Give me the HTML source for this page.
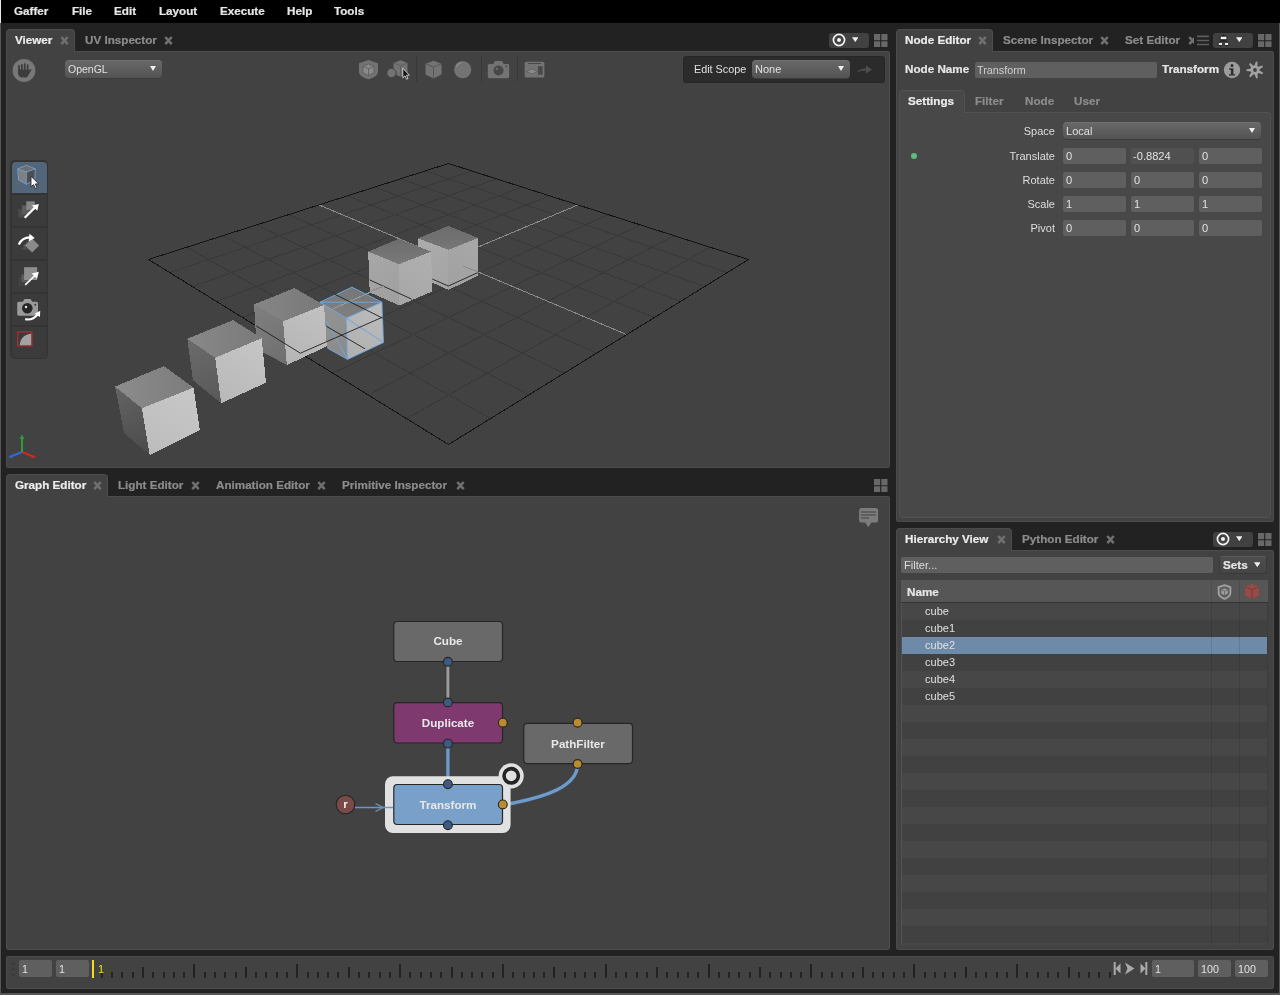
<!DOCTYPE html>
<html>
<head>
<meta charset="utf-8">
<title>Gaffer</title>
<style>
*{box-sizing:border-box;margin:0;padding:0}
html,body{width:1280px;height:995px;overflow:hidden;background:#222222}
body{position:relative;font-family:"Liberation Sans",sans-serif;font-size:12px;color:#e0e0e0}
.abs{position:absolute}
.t{position:absolute;white-space:nowrap;line-height:14px}
.bold{font-weight:bold}
#menubar{position:absolute;left:0;top:0;width:1280px;height:23px;background:#000}
#menubar .b{top:4px}
.panel{position:absolute;background:#424242;border:1px solid #4c4c4c;border-radius:0 2px 2px 2px}
.r{position:absolute;white-space:nowrap;font-size:10.5px;line-height:14px;color:#e0e0e0;transform:scaleX(1.05);transform-origin:0 50%}
.s{display:inline-block;transform:scaleX(1.06);transform-origin:0 50%}
.b{position:absolute;white-space:nowrap;font-size:10.5px;line-height:14px;font-weight:bold;color:#e6e6e6;-webkit-text-stroke:.2px;transform:scaleX(1.11);transform-origin:0 50%}
.dd{position:absolute;border-radius:4px;background:linear-gradient(#686868,#535353);border-top:1px solid #707070;border-bottom:1px solid #3c3c3c}
.dd:after{content:"";position:absolute;right:6px;top:5px;border-left:3.700px solid transparent;border-right:3.700px solid transparent;border-top:5.600px solid #efefef}
.tab{position:absolute;height:23px;background:#424242;border-top:1px solid #4e4e4e;border-radius:4px 4px 0 0}
.tabt{position:absolute;white-space:nowrap;font-weight:bold;font-size:11.5px;line-height:14px;letter-spacing:.3px;color:#8a8a8a}
.tabt.on{color:#ececec}
.x{position:absolute;width:9px;height:9px}
.field{position:absolute;background:#5f5f5f;border-radius:3px;border-top:1px solid #555;height:17px;color:#e6e6e6;font-size:11px;line-height:16px;padding-left:4px;white-space:nowrap;overflow:hidden}
.lbl{position:absolute;white-space:nowrap;font-size:11.5px;line-height:14px;color:#dcdcdc;text-align:right}
.tab{border:1px solid #4c4c4c;border-bottom:none}
.tb{position:absolute;white-space:nowrap;font-size:10.5px;line-height:14px;font-weight:bold;color:#8c8c8c;-webkit-text-stroke:.2px;transform:scaleX(1.11);transform-origin:0 50%}
.tb.on{color:#ececec}
.mb{position:absolute;height:15px;background:#414141;border-radius:3px}
.f{position:absolute;height:16px;background:#5f5f5f;border-radius:2px;font-size:10.5px;line-height:16px;color:#e2e2e2;padding-left:4px;white-space:nowrap}
.rl{position:absolute;white-space:nowrap;font-size:10.5px;line-height:14px;color:#dedede;text-align:right;width:120px;transform:scaleX(1.05);transform-origin:100% 50%}
</style>
</head>
<body>
<div id="root" style="position:absolute;left:0;top:0;width:1280px;height:995px;will-change:transform">
<!-- MENUBAR -->
<div id="menubar">
  <div class="abs" style="left:0;top:0;width:1px;height:23px;background:#e8e8e8"></div>
  <div class="b" style="left:14px">Gaffer</div>
  <div class="b" style="left:72px">File</div>
  <div class="b" style="left:114px">Edit</div>
  <div class="b" style="left:159px">Layout</div>
  <div class="b" style="left:220px">Execute</div>
  <div class="b" style="left:287px">Help</div>
  <div class="b" style="left:334px">Tools</div>
</div>
<div class="abs" style="left:0;top:23px;width:1.100px;height:972px;background:#565656"></div>
<div class="abs" style="left:1278.800px;top:23px;width:1.200px;height:972px;background:#585858"></div>
<div class="abs" style="left:0;top:993.400px;width:1280px;height:1.600px;background:#565656"></div>

<!-- VIEWER PANEL -->
<div class="panel" id="viewer" style="left:6px;top:51px;width:884px;height:417px"></div>
<!--V3D--><svg class="abs" style="left:0;top:0" width="1280" height="995" viewBox="0 0 1280 995" shape-rendering="crispEdges"><defs><linearGradient id="t0" gradientUnits="userSpaceOnUse" x1="448.4" y1="225.9" x2="448.4" y2="249.8"><stop offset="0" stop-color="#6c6c6c"/><stop offset="1" stop-color="#777777"/></linearGradient><linearGradient id="l0" gradientUnits="userSpaceOnUse" x1="418.0" y1="238.4" x2="448.4" y2="289.9"><stop offset="0" stop-color="#acacac"/><stop offset="1" stop-color="#a4a4a4"/></linearGradient><linearGradient id="r0" gradientUnits="userSpaceOnUse" x1="478.2" y1="238.0" x2="448.4" y2="289.9"><stop offset="0" stop-color="#a8a8a8"/><stop offset="1" stop-color="#a0a0a0"/></linearGradient><linearGradient id="t1" gradientUnits="userSpaceOnUse" x1="398.6" y1="238.9" x2="399.1" y2="264.2"><stop offset="0" stop-color="#6c6c6c"/><stop offset="1" stop-color="#7a7a7a"/></linearGradient><linearGradient id="l1" gradientUnits="userSpaceOnUse" x1="368.2" y1="251.6" x2="399.5" y2="305.5"><stop offset="0" stop-color="#a8a8a8"/><stop offset="1" stop-color="#9e9e9e"/></linearGradient><linearGradient id="r1" gradientUnits="userSpaceOnUse" x1="431.2" y1="251.6" x2="399.5" y2="305.5"><stop offset="0" stop-color="#b0b0b0"/><stop offset="1" stop-color="#a6a6a6"/></linearGradient><linearGradient id="t2" gradientUnits="userSpaceOnUse" x1="351.9" y1="287.2" x2="346.2" y2="318.1"><stop offset="0" stop-color="#767676"/><stop offset="1" stop-color="#808080"/></linearGradient><linearGradient id="l2" gradientUnits="userSpaceOnUse" x1="320.0" y1="302.2" x2="347.5" y2="359.4"><stop offset="0" stop-color="#949494"/><stop offset="1" stop-color="#8a8a8a"/></linearGradient><linearGradient id="r2" gradientUnits="userSpaceOnUse" x1="381.9" y1="302.2" x2="347.5" y2="359.4"><stop offset="0" stop-color="#bcbcbc"/><stop offset="1" stop-color="#b0b0b0"/></linearGradient><linearGradient id="t3" gradientUnits="userSpaceOnUse" x1="254.0" y1="304.4" x2="324.0" y2="305.0"><stop offset="0" stop-color="#868686"/><stop offset="1" stop-color="#787878"/></linearGradient><linearGradient id="l3" gradientUnits="userSpaceOnUse" x1="254.0" y1="304.4" x2="286.9" y2="365.0"><stop offset="0" stop-color="#808080"/><stop offset="1" stop-color="#6e6e6e"/></linearGradient><linearGradient id="r3" gradientUnits="userSpaceOnUse" x1="324.0" y1="305.0" x2="286.9" y2="365.0"><stop offset="0" stop-color="#c2c2c2"/><stop offset="1" stop-color="#b4b4b4"/></linearGradient><linearGradient id="t4" gradientUnits="userSpaceOnUse" x1="187.3" y1="338.7" x2="261.7" y2="338.2"><stop offset="0" stop-color="#888888"/><stop offset="1" stop-color="#7a7a7a"/></linearGradient><linearGradient id="l4" gradientUnits="userSpaceOnUse" x1="187.3" y1="338.7" x2="221.2" y2="403.3"><stop offset="0" stop-color="#6c6c6c"/><stop offset="1" stop-color="#585858"/></linearGradient><linearGradient id="r4" gradientUnits="userSpaceOnUse" x1="261.7" y1="338.2" x2="221.2" y2="403.3"><stop offset="0" stop-color="#c6c6c6"/><stop offset="1" stop-color="#b8b8b8"/></linearGradient><linearGradient id="t5" gradientUnits="userSpaceOnUse" x1="115.1" y1="386.6" x2="193.5" y2="387.6"><stop offset="0" stop-color="#8c8c8c"/><stop offset="1" stop-color="#7c7c7c"/></linearGradient><linearGradient id="l5" gradientUnits="userSpaceOnUse" x1="115.1" y1="386.6" x2="149.8" y2="455.3"><stop offset="0" stop-color="#646464"/><stop offset="1" stop-color="#4a4a4a"/></linearGradient><linearGradient id="r5" gradientUnits="userSpaceOnUse" x1="193.5" y1="387.6" x2="149.8" y2="455.3"><stop offset="0" stop-color="#c8c8c8"/><stop offset="1" stop-color="#bcbcbc"/></linearGradient></defs><line x1="471.8" y1="171.0" x2="169.7" y2="272.6" stroke="#383838" stroke-width="1" />
<line x1="425.2" y1="171.0" x2="727.3" y2="272.6" stroke="#383838" stroke-width="1" />
<line x1="496.4" y1="178.8" x2="192.3" y2="286.5" stroke="#383838" stroke-width="1" />
<line x1="400.6" y1="178.8" x2="704.7" y2="286.5" stroke="#383838" stroke-width="1" />
<line x1="522.2" y1="187.1" x2="216.5" y2="301.4" stroke="#383838" stroke-width="1" />
<line x1="374.8" y1="187.1" x2="680.5" y2="301.4" stroke="#383838" stroke-width="1" />
<line x1="549.3" y1="195.8" x2="242.4" y2="317.4" stroke="#383838" stroke-width="1" />
<line x1="347.7" y1="195.8" x2="654.6" y2="317.4" stroke="#383838" stroke-width="1" />
<line x1="608.3" y1="214.6" x2="300.3" y2="353.1" stroke="#383838" stroke-width="1" />
<line x1="288.7" y1="214.6" x2="596.7" y2="353.1" stroke="#383838" stroke-width="1" />
<line x1="640.3" y1="224.9" x2="332.9" y2="373.2" stroke="#383838" stroke-width="1" />
<line x1="256.7" y1="224.9" x2="564.1" y2="373.2" stroke="#383838" stroke-width="1" />
<line x1="674.2" y1="235.7" x2="368.1" y2="394.9" stroke="#383838" stroke-width="1" />
<line x1="222.8" y1="235.7" x2="528.9" y2="394.9" stroke="#383838" stroke-width="1" />
<line x1="710.2" y1="247.2" x2="406.5" y2="418.6" stroke="#383838" stroke-width="1" />
<line x1="186.8" y1="247.2" x2="490.5" y2="418.6" stroke="#383838" stroke-width="1" />
<line x1="578.0" y1="204.9" x2="270.3" y2="334.6" stroke="#8a8a8a" stroke-width="1" />
<line x1="319.0" y1="204.9" x2="626.7" y2="334.6" stroke="#8a8a8a" stroke-width="1" />
<polygon points="448.5,163.5 148.5,259.5 448.5,444.5 748.5,259.5" fill="none" stroke="#141414" stroke-width="1"/>
<polygon points="448.4,225.9 418.0,238.4 448.4,249.8 478.2,238.0" fill="url(#t0)" />
<polygon points="418.0,238.4 448.4,249.8 448.4,289.9 418.0,276.0" fill="url(#l0)" />
<polygon points="448.4,249.8 478.2,238.0 478.2,275.6 448.4,289.9" fill="url(#r0)" />
<polygon points="398.6,238.9 368.2,251.6 399.1,264.2 431.2,251.6" fill="url(#t1)" />
<polygon points="368.2,251.6 399.1,264.2 399.5,305.5 369.7,292.3" fill="url(#l1)" />
<polygon points="399.1,264.2 431.2,251.6 432.1,291.4 399.5,305.5" fill="url(#r1)" />
<polygon points="351.9,287.2 320.0,302.2 346.2,318.1 381.9,302.2" fill="url(#t2)" />
<polygon points="320.0,302.2 346.2,318.1 347.5,359.4 327.5,348.1" fill="url(#l2)" />
<polygon points="346.2,318.1 381.9,302.2 383.5,342.5 347.5,359.4" fill="url(#r2)" />
<line x1="333.5" y1="308.6" x2="379.6" y2="288.1" stroke="#9a9a9a" stroke-width="1" />
<line x1="351.9" y1="287.2" x2="320.0" y2="302.2" stroke="#6ea6dc" stroke-width="1" shape-rendering="geometricPrecision"/>
<line x1="320.0" y1="302.2" x2="346.2" y2="318.1" stroke="#6ea6dc" stroke-width="1" shape-rendering="geometricPrecision"/>
<line x1="346.2" y1="318.1" x2="381.9" y2="302.2" stroke="#6ea6dc" stroke-width="1" shape-rendering="geometricPrecision"/>
<line x1="381.9" y1="302.2" x2="351.9" y2="287.2" stroke="#6ea6dc" stroke-width="1" shape-rendering="geometricPrecision"/>
<line x1="346.2" y1="318.1" x2="347.5" y2="359.4" stroke="#6ea6dc" stroke-width="1" shape-rendering="geometricPrecision"/>
<line x1="381.9" y1="302.2" x2="383.5" y2="342.5" stroke="#6ea6dc" stroke-width="1" shape-rendering="geometricPrecision"/>
<line x1="383.5" y1="342.5" x2="347.5" y2="359.4" stroke="#6ea6dc" stroke-width="1" shape-rendering="geometricPrecision"/>
<line x1="347.5" y1="359.4" x2="327.5" y2="348.1" stroke="#6ea6dc" stroke-width="1" shape-rendering="geometricPrecision"/>
<line x1="320.0" y1="302.2" x2="381.9" y2="302.2" stroke="#6ea6dc" stroke-width="1" shape-rendering="geometricPrecision"/>
<line x1="346.2" y1="318.1" x2="383.5" y2="342.5" stroke="#6ea6dc" stroke-width="1" shape-rendering="geometricPrecision"/>
<line x1="325.6" y1="319.4" x2="346.5" y2="357.5" stroke="#6ea6dc" stroke-width="1" shape-rendering="geometricPrecision"/>
<polygon points="294.4,288.1 254.0,304.4 283.1,321.3 324.0,305.0" fill="url(#t3)" />
<polygon points="254.0,304.4 283.1,321.3 286.9,365.0 256.9,349.0" fill="url(#l3)" />
<polygon points="283.1,321.3 324.0,305.0 326.9,346.3 286.9,365.0" fill="url(#r3)" />
<polygon points="233.1,320.1 187.3,338.7 215.2,357.8 261.7,338.2" fill="url(#t4)" />
<polygon points="187.3,338.7 215.2,357.8 221.2,403.3 192.9,380.1" fill="url(#l4)" />
<polygon points="215.2,357.8 261.7,338.2 266.0,382.6 221.2,403.3" fill="url(#r4)" />
<polygon points="163.9,366.1 115.1,386.6 141.8,408.3 193.5,387.6" fill="url(#t5)" />
<polygon points="115.1,386.6 141.8,408.3 149.8,455.3 124.1,432.8" fill="url(#l5)" />
<polygon points="141.8,408.3 193.5,387.6 199.9,430.2 149.8,455.3" fill="url(#r5)" />
<polyline points="432.3,279.1 448.4,286.0 477.8,272.6" fill="none" stroke="#161616" stroke-width=".85" shape-rendering="geometricPrecision"/>
<line x1="463.1" y1="266.2" x2="477.8" y2="271.8" stroke="#8a8a8a" stroke-width="1" />
<line x1="369.6" y1="279.9" x2="411.8" y2="299.2" stroke="#161616" stroke-width="0.85" shape-rendering="geometricPrecision"/>
<line x1="371.7" y1="290.6" x2="384.4" y2="286.0" stroke="#8a8a8a" stroke-width="1" />
<line x1="300.6" y1="353.1" x2="382.5" y2="317.2" stroke="#161616" stroke-width="0.85" shape-rendering="geometricPrecision"/>
<line x1="326.2" y1="326.2" x2="365.0" y2="348.8" stroke="#161616" stroke-width="0.85" shape-rendering="geometricPrecision"/>
<line x1="335.0" y1="294.4" x2="382.5" y2="318.1" stroke="#161616" stroke-width="0.85" shape-rendering="geometricPrecision"/>
<line x1="256.2" y1="325.9" x2="300.6" y2="353.3" stroke="#161616" stroke-width="0.85" shape-rendering="geometricPrecision"/></svg><!--/V3D-->
<!-- viewer toolbar -->
<svg class="abs" style="left:11px;top:58px" width="26" height="26" viewBox="11 58 26 26"><circle cx="24" cy="70.400" r="11.400" fill="#787878"/><g fill="#3c3c3c"><rect x="18.100" y="65.100" width="1.700" height="8" rx=".8"/><rect x="21" y="64" width="1.700" height="8" rx=".8"/><rect x="23.900" y="63.200" width="1.700" height="8" rx=".8"/><rect x="26.800" y="64.200" width="1.700" height="8" rx=".8"/><path d="M18.100 69.600h10.400v1.700l1.700-2.200c.5-.6 1.600.2 1.100 1l-3.200 5.600c-.7 1.200-1.700 1.900-3 1.900h-3c-2.300 0-4-1.700-4-4z"/></g></svg>
<div class="dd" style="left:65px;top:60px;width:97px;height:18.500px"></div>
<div class="r" style="left:68px;top:62px;transform:none">OpenGL</div>
<div class="abs" style="left:683px;top:56px;width:202px;height:27px;background:#2b2b2b;border:1px solid #262626;border-radius:3px"></div>
<div class="r" style="left:694px;top:62px;font-size:10.8px;transform:none">Edit Scope</div>
<div class="dd" style="left:752px;top:60px;width:97.500px;height:18.500px"></div>
<div class="r" style="left:755px;top:62px">None</div>
<svg class="abs" style="left:855px;top:62px" width="18" height="14" viewBox="0 0 18 14"><path d="M1 11C4 7.500 7 6.500 11 6.500V3.500L17 7.500 11 11.500V8.500C7 8.500 4 9.200 1 11z" fill="#4e4e4e"/></svg>
<!--TBICONS--><svg class="abs" style="left:350px;top:52px" width="210" height="40" viewBox="350 52 210 40"><path d="M416.5 56V82" stroke="#383838" stroke-width="1"/><path d="M481.5 56V82" stroke="#383838" stroke-width="1"/><path d="M517.5 56V82" stroke="#383838" stroke-width="1"/><path d="M368.500 60l9.500 3.200v8.500c0 3.500-4.500 6-9.500 7.500-5-1.500-9.500-4-9.500-7.500v-8.500z" fill="#737373"/><path d="M368.500 64l5.500 2.300v6.500l-5.500 2.700-5.500-2.700v-6.500z" fill="#8a8a8a" stroke="#5a5a5a" stroke-width=".8"/><path d="M363 66.300l5.500 2.400 5.500-2.400M368.500 68.700v6.800" stroke="#5a5a5a" stroke-width=".8" fill="none"/><path d="M400.500 60.200l7 2.800v10.500l-7 3.200-7-3.200V63z" fill="#737373"/><path d="M393.500 63l7 2.800 7-2.800M400.500 65.800v10.900" stroke="#5c5c5c" stroke-width=".8" fill="none"/><circle cx="391.500" cy="73" r="4.600" fill="#737373" stroke="#434343" stroke-width="1"/><path d="M402.800 68.300v9.500l2.200-2 1.500 3.400 1.500-.7-1.500-3.300h2.900z" fill="#111" stroke="#eee" stroke-width=".8"/><path d="M433.500 60.800l8 3v10.800l-8 3.800-8-3.800V63.800z" fill="#737373"/><path d="M425.500 63.800l8 3.200 8-3.200M433.500 67v11.400" stroke="#565656" stroke-width="1" fill="none"/><circle cx="462.700" cy="69.600" r="8.600" fill="#737373"/><path d="M456.500 66.500c1.200-2.300 3-3.600 5.200-4" stroke="#8c8c8c" stroke-width="1.200" fill="none" stroke-linecap="round"/><path d="M489.500 64h3.800l1.700-3h7l1.700 3h3.800c1 0 1.700.7 1.700 1.700v10.800c0 1-.7 1.700-1.700 1.700h-18c-1 0-1.700-.7-1.700-1.700V65.700c0-1 .7-1.700 1.700-1.700z" fill="#737373"/><circle cx="498.500" cy="70.500" r="5" fill="#484848"/><circle cx="496.800" cy="68.800" r="1.100" fill="#737373"/><circle cx="506.300" cy="66.300" r=".9" fill="#484848"/><rect x="524.700" y="61.800" width="19.700" height="15.600" rx="1.500" fill="#737373"/><path d="M528 63.500h13" stroke="#484848" stroke-width="1"/><rect x="538" y="66.200" width="4.600" height="8.500" fill="#484848"/><path d="M526.500 71.500l5.500-2.500 5.500 2.500-5.500 2.500z" fill="#8a8a8a" stroke="#555" stroke-width=".6"/></svg><!--/TBICONS-->
<!--TOOLS--><div class="abs" style="left:10px;top:160px;width:38px;height:199px;background:#343434;border-radius:5px"></div><div class="abs" style="left:11.500px;top:161.5px;width:35px;height:31px;background:#536578;border-radius:4px 4px 0 0"></div><div class="abs" style="left:11.500px;top:194.5px;width:35px;height:31px;background:#3b3b3b;border-radius:0"></div><div class="abs" style="left:11.500px;top:227.5px;width:35px;height:31px;background:#3b3b3b;border-radius:0"></div><div class="abs" style="left:11.500px;top:260.5px;width:35px;height:31px;background:#3b3b3b;border-radius:0"></div><div class="abs" style="left:11.500px;top:293.5px;width:35px;height:31px;background:#3b3b3b;border-radius:0"></div><div class="abs" style="left:11.500px;top:326.5px;width:35px;height:31px;background:#3b3b3b;border-radius:0 0 4px 4px"></div><svg class="abs" style="left:6px;top:156px" width="50" height="210" viewBox="6 156 50 210"><path d="M26.300 165.400L35.300 168.800 26.300 172 17.700 168.800z" fill="#6e6e6e"/><path d="M17.700 168.800L26.300 172V184.300L18.600 180z" fill="#808080"/><path d="M26.300 172L35.300 168.800 34.800 180 26.300 184.300z" fill="#4e4e4e"/><path d="M26.300 165.400L35.300 168.800 34.800 180 26.300 184.300 18.600 180 17.700 168.800zM17.700 168.800L26.300 172 35.300 168.800M26.300 172V184.300" fill="none" stroke="#6fa3d6" stroke-width=".9"/><path d="M31 176.300v10.600l2.500-2.300 1.900 4 1.700-.8-1.900-3.900h3.600z" fill="#fff" stroke="#2a2a2a" stroke-width=".9"/><rect x="18.300" y="209.300" width="7" height="8" fill="#4c4c4c"/><rect x="22" y="205.500" width="7.500" height="8.500" fill="#5e5e5e"/><rect x="26.300" y="201.300" width="8.500" height="8.500" fill="#868686"/><path d="M24.700 217.800L36 206.500" stroke="#fff" stroke-width="2.200"/><path d="M38.800 204l-1.500 6.800-5.300-5.300z" fill="#fff"/><path d="M21 249.500l5-5 5 5z" fill="#4e4e4e"/><path d="M23 246l6-5.500 5 7z" fill="#5c5c5c"/><path d="M32.100 238.500l7 7-7 7-7-7z" fill="#8a8a8a"/><path d="M18.800 244.400c2.500-5 7.500-7.500 12.700-7" stroke="#fff" stroke-width="2.200" fill="none"/><path d="M29.500 233.800l5.200 4.300-6 3.300z" fill="#fff"/><rect x="19.500" y="278.500" width="8" height="6.500" fill="none" stroke="#4a4a4a" stroke-width="1"/><rect x="21.500" y="274.500" width="9" height="8" fill="#5a5a5a"/><rect x="24.100" y="267.200" width="13" height="12.800" fill="#8e8e8e"/><path d="M25.200 284.800L36 274.500" stroke="#fff" stroke-width="1.600"/><path d="M38.800 271.800l-1.800 7-5.300-5.300z" fill="#fff"/><path d="M18.900 301.800h3.800l1.800-2.700h6l1.800 2.700h4c1 0 1.700.7 1.700 1.700v10.500c0 1-.7 1.700-1.700 1.700H18.900c-1 0-1.700-.7-1.700-1.700v-10.500c0-1 .7-1.700 1.700-1.700z" fill="#9a9a9a"/><circle cx="27.300" cy="308.200" r="5.300" fill="#262626"/><circle cx="26" cy="307" r="1.200" fill="#e8e8e8"/><circle cx="35.300" cy="304.700" r="1" fill="#3a3a3a"/><path d="M25.200 319.200c5 1 9.500-1 12.500-4.800" stroke="#fff" stroke-width="2.200" fill="none"/><path d="M40.300 310.700l-.4 6.300-5.300-3.300z" fill="#fff"/><path d="M31.400 333.800v11.600H19.800c0-6.500 5-11.600 11.600-11.600z" fill="#a2a2a2"/><rect x="17.700" y="331.900" width="14.200" height="14" fill="none" stroke="#c8282c" stroke-width="1"/></svg><svg class="abs" style="left:6px;top:430px" width="40" height="34" viewBox="6 430 40 34"><path d="M22 452L9.500 457" stroke="#3565d8" stroke-width="2"/><path d="M8 457.700l4.500-3.200.8 3z" fill="#3565d8"/><path d="M22 452L34.500 457" stroke="#d02828" stroke-width="2"/><path d="M36 457.700l-4.500-3.200-.8 3z" fill="#d02828"/><path d="M22 452V437" stroke="#2e9e34" stroke-width="2"/><path d="M22 434.500l2.300 4.500h-4.600z" fill="#2e9e34"/></svg><!--/TOOLS-->


<!-- GRAPH EDITOR PANEL -->
<div class="panel" id="graph" style="left:6px;top:496px;width:884px;height:454px"></div>

<!-- NODE EDITOR PANEL -->
<div class="panel" id="nodeed" style="left:896px;top:51px;width:378px;height:471px"></div>

<!-- HIERARCHY PANEL -->
<div class="panel" id="hier" style="left:896px;top:550px;width:378px;height:400px"></div>

<!-- TABS -->
<div class="tab" style="left:6px;top:29px;width:69px"></div>
<div class="tab" style="left:6px;top:474px;width:102px"></div>
<div class="tab" style="left:896px;top:29px;width:97px"></div>
<div class="tab" style="left:896px;top:528px;width:115.500px"></div>
<!-- TAB LABELS -->
<div class="tb on" style="left:15px;top:33px">Viewer</div><svg class="abs" style="left:59.5px;top:36px" width="9" height="9" viewBox="0 0 9 9"><path d="M1.300 1L7.700 8.100M7.700 1L1.300 8.100" stroke="#707070" stroke-width="2.600" stroke-linecap="butt"/></svg><div class="tb" style="left:85px;top:33px">UV Inspector</div><svg class="abs" style="left:163.5px;top:36px" width="9" height="9" viewBox="0 0 9 9"><path d="M1.300 1L7.700 8.100M7.700 1L1.300 8.100" stroke="#707070" stroke-width="2.600" stroke-linecap="butt"/></svg><div class="mb" style="left:829px;top:33px;width:40px"></div><svg class="abs" style="left:832px;top:33px" width="14" height="14" viewBox="0 0 14 14"><circle cx="7" cy="7" r="5.600" fill="none" stroke="#f2f2f2" stroke-width="1.700"/><circle cx="7" cy="7" r="2" fill="#f2f2f2"/></svg><svg class="abs" style="left:851.8px;top:37.0px" width="6.600" height="5.300" viewBox="0 0 8 6"><path d="M0 0h8L4 6z" fill="#efefef"/></svg><svg class="abs" style="left:874px;top:33.5px" width="13.500" height="13.500" viewBox="0 0 14 14"><path d="M0 0h6.400v6.400H0zM7.600 0H14v6.400H7.600zM0 7.600h6.400V14H0zM7.600 7.600H14V14H7.600z" fill="#686868"/></svg><div class="tb on" style="left:15px;top:478px">Graph Editor</div><svg class="abs" style="left:92.5px;top:481px" width="9" height="9" viewBox="0 0 9 9"><path d="M1.300 1L7.700 8.100M7.700 1L1.300 8.100" stroke="#707070" stroke-width="2.600" stroke-linecap="butt"/></svg><div class="tb" style="left:118px;top:478px">Light Editor</div><svg class="abs" style="left:190.5px;top:481px" width="9" height="9" viewBox="0 0 9 9"><path d="M1.300 1L7.700 8.100M7.700 1L1.300 8.100" stroke="#707070" stroke-width="2.600" stroke-linecap="butt"/></svg><div class="tb" style="left:216px;top:478px">Animation Editor</div><svg class="abs" style="left:316.5px;top:481px" width="9" height="9" viewBox="0 0 9 9"><path d="M1.300 1L7.700 8.100M7.700 1L1.300 8.100" stroke="#707070" stroke-width="2.600" stroke-linecap="butt"/></svg><div class="tb" style="left:342px;top:478px">Primitive Inspector</div><svg class="abs" style="left:455.5px;top:481px" width="9" height="9" viewBox="0 0 9 9"><path d="M1.300 1L7.700 8.100M7.700 1L1.300 8.100" stroke="#707070" stroke-width="2.600" stroke-linecap="butt"/></svg><svg class="abs" style="left:874px;top:478.5px" width="13.500" height="13.500" viewBox="0 0 14 14"><path d="M0 0h6.400v6.400H0zM7.600 0H14v6.400H7.600zM0 7.600h6.400V14H0zM7.600 7.600H14V14H7.600z" fill="#686868"/></svg><div class="tb on" style="left:905px;top:33px">Node Editor</div><svg class="abs" style="left:977.5px;top:36px" width="9" height="9" viewBox="0 0 9 9"><path d="M1.300 1L7.700 8.100M7.700 1L1.300 8.100" stroke="#707070" stroke-width="2.600" stroke-linecap="butt"/></svg><div class="tb" style="left:1003px;top:33px">Scene Inspector</div><svg class="abs" style="left:1099.5px;top:36px" width="9" height="9" viewBox="0 0 9 9"><path d="M1.300 1L7.700 8.100M7.700 1L1.300 8.100" stroke="#707070" stroke-width="2.600" stroke-linecap="butt"/></svg><div class="tb" style="left:1125px;top:33px">Set Editor</div><svg class="abs" style="left:1187.5px;top:36px" width="9" height="9" viewBox="0 0 9 9"><path d="M1.300 1L7.700 8.100M7.700 1L1.300 8.100" stroke="#707070" stroke-width="2.600" stroke-linecap="butt"/></svg><div class="abs" style="left:1194px;top:30px;width:84px;height:21px;background:#222"></div><svg class="abs" style="left:1197px;top:35px" width="13" height="12" viewBox="0 0 13 12"><path d="M0 1.400h12M0 5.500h12M0 9.500h12" stroke="#5e5e5e" stroke-width="1.700"/></svg><div class="mb" style="left:1213px;top:33px;width:40px"></div><svg class="abs" style="left:1217px;top:34px" width="14" height="13" viewBox="1217 34 14 13"><path d="M1223.500 34.500v2M1223.500 39.500v1.500M1220.500 42.500v-1.500h6v1.500M1220.500 45.500v1M1226.500 45.500v1" stroke="#1a1a1a" stroke-width="1" fill="none"/><rect x="1220.200" y="36.200" width="6.700" height="3.500" rx=".8" fill="#f4f4f4" stroke="#1a1a1a" stroke-width=".9"/><rect x="1218.300" y="42.300" width="4.300" height="3.200" rx=".7" fill="#e8e8e8" stroke="#1a1a1a" stroke-width=".9"/><rect x="1224.400" y="42.300" width="4.300" height="3.200" rx=".7" fill="#e8e8e8" stroke="#1a1a1a" stroke-width=".9"/></svg><svg class="abs" style="left:1235.8px;top:37.0px" width="6.600" height="5.300" viewBox="0 0 8 6"><path d="M0 0h8L4 6z" fill="#efefef"/></svg><svg class="abs" style="left:1258px;top:33.5px" width="13.500" height="13.500" viewBox="0 0 14 14"><path d="M0 0h6.400v6.400H0zM7.600 0H14v6.400H7.600zM0 7.600h6.400V14H0zM7.600 7.600H14V14H7.600z" fill="#686868"/></svg><div class="tb on" style="left:905px;top:532px">Hierarchy View</div><svg class="abs" style="left:996.5px;top:535px" width="9" height="9" viewBox="0 0 9 9"><path d="M1.300 1L7.700 8.100M7.700 1L1.300 8.100" stroke="#707070" stroke-width="2.600" stroke-linecap="butt"/></svg><div class="tb" style="left:1022px;top:532px">Python Editor</div><svg class="abs" style="left:1105.5px;top:535px" width="9" height="9" viewBox="0 0 9 9"><path d="M1.300 1L7.700 8.100M7.700 1L1.300 8.100" stroke="#707070" stroke-width="2.600" stroke-linecap="butt"/></svg><div class="mb" style="left:1213px;top:532px;width:40px"></div><svg class="abs" style="left:1216px;top:532px" width="14" height="14" viewBox="0 0 14 14"><circle cx="7" cy="7" r="5.600" fill="none" stroke="#f2f2f2" stroke-width="1.700"/><circle cx="7" cy="7" r="2" fill="#f2f2f2"/></svg><svg class="abs" style="left:1235.8px;top:536.0px" width="6.600" height="5.300" viewBox="0 0 8 6"><path d="M0 0h8L4 6z" fill="#efefef"/></svg><svg class="abs" style="left:1258px;top:532.5px" width="13.500" height="13.500" viewBox="0 0 14 14"><path d="M0 0h6.400v6.400H0zM7.600 0H14v6.400H7.600zM0 7.600h6.400V14H0zM7.600 7.600H14V14H7.600z" fill="#686868"/></svg>

<!-- NODE EDITOR CONTENT -->
<div class="b" style="left:905px;top:62px">Node Name</div>
<div class="f" style="left:975px;top:62px;width:182px;color:#cfcfcf;line-height:17px;padding-left:2px"><span class="s" style="transform:scaleX(1.03)">Transform</span></div>
<div class="b" style="left:1162px;top:62px">Transform</div>
<svg class="abs" style="left:1223px;top:61px" width="18" height="18" viewBox="0 0 18 18"><circle cx="9" cy="9" r="8.200" fill="#9c9c9c"/><circle cx="9" cy="4.500" r="1.500" fill="#2e2e2e"/><path d="M6.200 7.300h4.200v5.900h1.700v1.400H6v-1.400h1.900V8.700H6.200z" fill="#2e2e2e"/></svg>
<svg class="abs" style="left:1245.800px;top:61px" width="18" height="18" viewBox="-9 -9 18 18"><g fill="#a2a2a2"><circle r="4.500"/><path d="M-1.500 -3.500L-.85 -8.500H.85L1.500 -3.500z" transform="rotate(12.0)"/><path d="M-1.500 -3.500L-.85 -8.500H.85L1.500 -3.500z" transform="rotate(63.4)"/><path d="M-1.500 -3.500L-.85 -8.500H.85L1.500 -3.500z" transform="rotate(114.9)"/><path d="M-1.500 -3.500L-.85 -8.500H.85L1.500 -3.500z" transform="rotate(166.3)"/><path d="M-1.500 -3.500L-.85 -8.500H.85L1.500 -3.500z" transform="rotate(217.7)"/><path d="M-1.500 -3.500L-.85 -8.500H.85L1.500 -3.500z" transform="rotate(269.1)"/><path d="M-1.500 -3.500L-.85 -8.500H.85L1.500 -3.500z" transform="rotate(320.6)"/></g><circle r="1.900" fill="#424242"/></svg>
<div class="abs" style="left:899px;top:112px;width:372px;height:406px;background:#484848;border:1px solid #515151;border-radius:0 3px 3px 3px"></div>
<div class="abs" style="left:899px;top:90px;width:66px;height:23px;background:#484848;border:1px solid #515151;border-bottom:none;border-radius:4px 4px 0 0"></div>
<div class="tb on" style="left:908px;top:94px">Settings</div>
<div class="tb" style="left:975px;top:94px">Filter</div>
<div class="tb" style="left:1025px;top:94px">Node</div>
<div class="tb" style="left:1074px;top:94px">User</div>
<div class="rl" style="left:935px;top:124px">Space</div>
<div class="dd" style="left:1063px;top:122px;width:198px;height:18px"></div>
<div class="r" style="left:1066px;top:124px">Local</div>
<div class="abs" style="left:911.300px;top:153.300px;width:5.400px;height:5.400px;border-radius:3px;background:#5fbe7e"></div>
<div class="rl" style="left:935px;top:149px">Translate</div><div class="f" style="left:1062.6px;top:147.6px;width:63px;height:16.800px;line-height:17.400px;padding-left:3px"><span class="s">0</span></div><div class="f" style="left:1130.6px;top:147.6px;width:63px;height:16.800px;line-height:17.400px;padding-left:2.500px;background:#505050"><span class="s">-0.8824</span></div><div class="f" style="left:1198.6px;top:147.6px;width:63px;height:16.800px;line-height:17.400px;padding-left:3px"><span class="s">0</span></div><div class="rl" style="left:935px;top:173px">Rotate</div><div class="f" style="left:1062.6px;top:171.6px;width:63px;height:16.800px;line-height:17.400px;padding-left:3px"><span class="s">0</span></div><div class="f" style="left:1130.6px;top:171.6px;width:63px;height:16.800px;line-height:17.400px;padding-left:3px"><span class="s">0</span></div><div class="f" style="left:1198.6px;top:171.6px;width:63px;height:16.800px;line-height:17.400px;padding-left:3px"><span class="s">0</span></div><div class="rl" style="left:935px;top:197px">Scale</div><div class="f" style="left:1062.6px;top:195.6px;width:63px;height:16.800px;line-height:17.400px;padding-left:3px"><span class="s">1</span></div><div class="f" style="left:1130.6px;top:195.6px;width:63px;height:16.800px;line-height:17.400px;padding-left:3px"><span class="s">1</span></div><div class="f" style="left:1198.6px;top:195.6px;width:63px;height:16.800px;line-height:17.400px;padding-left:3px"><span class="s">1</span></div><div class="rl" style="left:935px;top:221px">Pivot</div><div class="f" style="left:1062.6px;top:219.6px;width:63px;height:16.800px;line-height:17.400px;padding-left:3px"><span class="s">0</span></div><div class="f" style="left:1130.6px;top:219.6px;width:63px;height:16.800px;line-height:17.400px;padding-left:3px"><span class="s">0</span></div><div class="f" style="left:1198.6px;top:219.6px;width:63px;height:16.800px;line-height:17.400px;padding-left:3px"><span class="s">0</span></div>

<!-- GRAPH EDITOR CONTENT -->
<svg class="abs" style="left:6px;top:497px" width="884" height="452" viewBox="6 497 884 452"><path d="M861.500 508h14.200c1.400 0 2.400 1 2.400 2.400v9.800c0 1.400-1 2.400-2.400 2.400h-4.200l-3.200 4.600-3.200-4.600h-3.600c-1.400 0-2.400-1-2.400-2.400v-9.800c0-1.400 1-2.400 2.400-2.400z" fill="#7c7c7c"/><path d="M861 512h15M861 515h15M861 518h8" stroke="#565656" stroke-width="1.500"/><path d="M447.900 662V703" stroke="#353535" stroke-width="4.400"/><path d="M447.900 662V703" stroke="#9c9c9c" stroke-width="3"/><path d="M447.900 744V785" stroke="#3f4f62" stroke-width="4.400"/><path d="M447.900 744V785" stroke="#6f9bc8" stroke-width="3.200"/><path d="M577.600 764C577.600 786 548 797 503 805" stroke="#3f4f62" stroke-width="4.400" fill="none"/><path d="M577.600 764C577.600 786 548 797 503 805" stroke="#6f9bc8" stroke-width="3.200" fill="none"/><rect x="385" y="776.200" width="125.600" height="56.800" rx="8" fill="#e1e1e1"/><circle cx="511.200" cy="775.800" r="12.600" fill="#e1e1e1"/><circle cx="511.200" cy="775.800" r="7.200" fill="none" stroke="#242424" stroke-width="3.600"/><rect x="393.8" y="621.5" width="108.7" height="40" rx="3.500" fill="#696969" stroke="#262626" stroke-width="1.200"/><rect x="393.8" y="702.7" width="108.7" height="40.3" rx="3.500" fill="#7e3a6e" stroke="#262626" stroke-width="1.200"/><rect x="523.8" y="723.3" width="108.7" height="40.3" rx="3.500" fill="#696969" stroke="#262626" stroke-width="1.200"/><rect x="393.8" y="784.5" width="108.7" height="40" rx="3.500" fill="#78a0c8" stroke="#262626" stroke-width="1.200"/><circle cx="447.9" cy="661.8" r="4.400" fill="#3e5a82" stroke="#262626" stroke-width="1.100"/><circle cx="447.9" cy="702.5" r="4.400" fill="#3e5a82" stroke="#262626" stroke-width="1.100"/><circle cx="447.9" cy="743.6" r="4.400" fill="#3e5a82" stroke="#262626" stroke-width="1.100"/><circle cx="502.8" cy="722.7" r="4.400" fill="#bb8b2f" stroke="#262626" stroke-width="1.100"/><circle cx="577.6" cy="722.7" r="4.400" fill="#bb8b2f" stroke="#262626" stroke-width="1.100"/><circle cx="577.6" cy="764" r="4.400" fill="#bb8b2f" stroke="#262626" stroke-width="1.100"/><circle cx="447.9" cy="784.2" r="4.400" fill="#3e5a82" stroke="#262626" stroke-width="1.100"/><circle cx="447.9" cy="825.2" r="4.400" fill="#3e5a82" stroke="#262626" stroke-width="1.100"/><circle cx="502.8" cy="804.4" r="4.400" fill="#bb8b2f" stroke="#262626" stroke-width="1.100"/><path d="M355 807.500H393" stroke="#6b96c0" stroke-width="1.400"/><path d="M375.500 803.500l7.500 4-7.500 4" stroke="#6b96c0" stroke-width="1.400" fill="none"/><circle cx="345.500" cy="804.500" r="9.300" fill="#7a4a4a" stroke="#262626" stroke-width="1.100"/></svg><div class="abs bold" style="left:388px;top:634px;width:120px;text-align:center;font-size:10.5px;line-height:14px;color:#e8e8e8;transform:scaleX(1.11)">Cube</div><div class="abs bold" style="left:388px;top:716px;width:120px;text-align:center;font-size:10.5px;line-height:14px;color:#e8e8e8;transform:scaleX(1.11)">Duplicate</div><div class="abs bold" style="left:518px;top:736.500px;width:120px;text-align:center;font-size:10.5px;line-height:14px;color:#e8e8e8;transform:scaleX(1.11)">PathFilter</div><div class="abs bold" style="left:388px;top:797.500px;width:120px;text-align:center;font-size:10.5px;line-height:14px;color:#e8e8e8;transform:scaleX(1.11)">Transform</div><div class="abs bold" style="left:335.500px;top:797px;width:20px;text-align:center;font-size:11.500px;line-height:14px;color:#f0f0f0">r</div>
<!-- HIERARCHY CONTENT -->
<div class="f" style="left:901px;top:557px;width:312px;height:16px;line-height:17px;padding-left:3px;color:#dcdcdc"><span class="s">Filter...</span></div><div class="abs" style="left:1219px;top:556px;width:48px;height:18px;border-radius:3px;background:linear-gradient(#4d4d4d,#454545);border:1px solid #3a3a3a;border-top-color:#5a5a5a"></div><div class="b" style="left:1223px;top:558px">Sets</div><svg class="abs" style="left:1253.8px;top:562.0px" width="6.600" height="5.300" viewBox="0 0 8 6"><path d="M0 0h8L4 6z" fill="#efefef"/></svg><div class="abs" style="left:901px;top:580px;width:367px;height:365px;background:#3c3c3c;overflow:hidden"><div class="abs" style="left:0;top:0;width:367px;height:23px;background:#565656;border-bottom:1px solid #343434"></div><div class="abs" style="left:1px;top:23px;width:365px;height:17px;background:#474747"></div><div class="abs" style="left:1px;top:40px;width:365px;height:17px;background:#414141"></div><div class="abs" style="left:1px;top:57px;width:365px;height:17px;background:#6d8aa8"></div><div class="abs" style="left:1px;top:74px;width:365px;height:17px;background:#414141"></div><div class="abs" style="left:1px;top:91px;width:365px;height:17px;background:#474747"></div><div class="abs" style="left:1px;top:108px;width:365px;height:17px;background:#414141"></div><div class="abs" style="left:1px;top:125px;width:365px;height:17px;background:#474747"></div><div class="abs" style="left:1px;top:142px;width:365px;height:17px;background:#414141"></div><div class="abs" style="left:1px;top:159px;width:365px;height:17px;background:#474747"></div><div class="abs" style="left:1px;top:176px;width:365px;height:17px;background:#414141"></div><div class="abs" style="left:1px;top:193px;width:365px;height:17px;background:#474747"></div><div class="abs" style="left:1px;top:210px;width:365px;height:17px;background:#414141"></div><div class="abs" style="left:1px;top:227px;width:365px;height:17px;background:#474747"></div><div class="abs" style="left:1px;top:244px;width:365px;height:17px;background:#414141"></div><div class="abs" style="left:1px;top:261px;width:365px;height:17px;background:#474747"></div><div class="abs" style="left:1px;top:278px;width:365px;height:17px;background:#414141"></div><div class="abs" style="left:1px;top:295px;width:365px;height:17px;background:#474747"></div><div class="abs" style="left:1px;top:312px;width:365px;height:17px;background:#414141"></div><div class="abs" style="left:1px;top:329px;width:365px;height:17px;background:#474747"></div><div class="abs" style="left:1px;top:346px;width:365px;height:17px;background:#414141"></div><div class="abs" style="left:1px;top:363px;width:365px;height:17px;background:#474747"></div><div class="abs" style="left:0;top:23px;width:1px;height:342px;background:#525252"></div><div class="abs" style="left:310px;top:0;width:1px;height:365px;background:rgba(0,0,0,.11)"></div><div class="abs" style="left:338px;top:0;width:1px;height:365px;background:rgba(0,0,0,.11)"></div></div><div class="b" style="left:906.500px;top:585px">Name</div><div class="r" style="left:925px;top:604px">cube</div><div class="r" style="left:925px;top:621px">cube1</div><div class="r" style="left:925px;top:638px">cube2</div><div class="r" style="left:925px;top:655px">cube3</div><div class="r" style="left:925px;top:672px">cube4</div><div class="r" style="left:925px;top:689px">cube5</div><svg class="abs" style="left:1216.500px;top:584px" width="15" height="16" viewBox="0 0 16 17"><path d="M8 1.200l6.300 2.200v5.800c0 3.200-3 5.300-6.300 6.600-3.300-1.300-6.300-3.400-6.300-6.600V3.400z" fill="#5e5e5e" stroke="#a2a2a2" stroke-width="1.900"/><path d="M8 4.700l3.400 1.400v4L8 11.900l-3.400-1.800v-4z" fill="#a0a0a0"/><path d="M4.600 6.100L8 7.600l3.400-1.500M8 7.600v4.300" stroke="#606060" stroke-width=".9" fill="none"/></svg><svg class="abs" style="left:1244px;top:583px" width="16" height="17" viewBox="0 0 16 17"><path d="M8 1l7 2.800v8.800L8 16l-7-3.400V3.800z" fill="#964b46"/><path d="M1 3.800l7 2.900 7-2.900M8 6.700V16" stroke="#7a3a36" stroke-width="1" fill="none"/></svg>
<!-- TIMELINE -->
<div class="panel" id="timeline" style="left:6px;top:956px;width:1268px;height:33px;border-radius:2px"></div>


<!-- TIMELINE CONTENT -->
<svg class="abs" style="left:6px;top:957px" width="1268" height="31" viewBox="6 957 1268 31" shape-rendering="crispEdges"><rect x="101" y="972" width="2" height="6" fill="#222"/><rect x="111" y="972" width="2" height="6" fill="#222"/><rect x="121" y="972" width="2" height="6" fill="#222"/><rect x="132" y="972" width="2" height="6" fill="#222"/><rect x="142" y="967" width="2" height="11" fill="#222"/><rect x="152" y="972" width="2" height="6" fill="#222"/><rect x="163" y="972" width="2" height="6" fill="#222"/><rect x="173" y="972" width="2" height="6" fill="#222"/><rect x="183" y="972" width="2" height="6" fill="#222"/><rect x="193" y="964" width="2" height="14" fill="#222"/><rect x="204" y="972" width="2" height="6" fill="#222"/><rect x="214" y="972" width="2" height="6" fill="#222"/><rect x="224" y="972" width="2" height="6" fill="#222"/><rect x="235" y="972" width="2" height="6" fill="#222"/><rect x="245" y="967" width="2" height="11" fill="#222"/><rect x="255" y="972" width="2" height="6" fill="#222"/><rect x="265" y="972" width="2" height="6" fill="#222"/><rect x="276" y="972" width="2" height="6" fill="#222"/><rect x="286" y="972" width="2" height="6" fill="#222"/><rect x="296" y="964" width="2" height="14" fill="#222"/><rect x="307" y="972" width="2" height="6" fill="#222"/><rect x="317" y="972" width="2" height="6" fill="#222"/><rect x="327" y="972" width="2" height="6" fill="#222"/><rect x="337" y="972" width="2" height="6" fill="#222"/><rect x="348" y="967" width="2" height="11" fill="#222"/><rect x="358" y="972" width="2" height="6" fill="#222"/><rect x="368" y="972" width="2" height="6" fill="#222"/><rect x="379" y="972" width="2" height="6" fill="#222"/><rect x="389" y="972" width="2" height="6" fill="#222"/><rect x="399" y="964" width="2" height="14" fill="#222"/><rect x="409" y="972" width="2" height="6" fill="#222"/><rect x="420" y="972" width="2" height="6" fill="#222"/><rect x="430" y="972" width="2" height="6" fill="#222"/><rect x="440" y="972" width="2" height="6" fill="#222"/><rect x="451" y="967" width="2" height="11" fill="#222"/><rect x="461" y="972" width="2" height="6" fill="#222"/><rect x="471" y="972" width="2" height="6" fill="#222"/><rect x="481" y="972" width="2" height="6" fill="#222"/><rect x="492" y="972" width="2" height="6" fill="#222"/><rect x="502" y="964" width="2" height="14" fill="#222"/><rect x="512" y="972" width="2" height="6" fill="#222"/><rect x="523" y="972" width="2" height="6" fill="#222"/><rect x="533" y="972" width="2" height="6" fill="#222"/><rect x="543" y="972" width="2" height="6" fill="#222"/><rect x="553" y="967" width="2" height="11" fill="#222"/><rect x="564" y="972" width="2" height="6" fill="#222"/><rect x="574" y="972" width="2" height="6" fill="#222"/><rect x="584" y="972" width="2" height="6" fill="#222"/><rect x="594" y="972" width="2" height="6" fill="#222"/><rect x="605" y="964" width="2" height="14" fill="#222"/><rect x="615" y="972" width="2" height="6" fill="#222"/><rect x="625" y="972" width="2" height="6" fill="#222"/><rect x="636" y="972" width="2" height="6" fill="#222"/><rect x="646" y="972" width="2" height="6" fill="#222"/><rect x="656" y="967" width="2" height="11" fill="#222"/><rect x="666" y="972" width="2" height="6" fill="#222"/><rect x="677" y="972" width="2" height="6" fill="#222"/><rect x="687" y="972" width="2" height="6" fill="#222"/><rect x="697" y="972" width="2" height="6" fill="#222"/><rect x="708" y="964" width="2" height="14" fill="#222"/><rect x="718" y="972" width="2" height="6" fill="#222"/><rect x="728" y="972" width="2" height="6" fill="#222"/><rect x="738" y="972" width="2" height="6" fill="#222"/><rect x="749" y="972" width="2" height="6" fill="#222"/><rect x="759" y="967" width="2" height="11" fill="#222"/><rect x="769" y="972" width="2" height="6" fill="#222"/><rect x="780" y="972" width="2" height="6" fill="#222"/><rect x="790" y="972" width="2" height="6" fill="#222"/><rect x="800" y="972" width="2" height="6" fill="#222"/><rect x="810" y="964" width="2" height="14" fill="#222"/><rect x="821" y="972" width="2" height="6" fill="#222"/><rect x="831" y="972" width="2" height="6" fill="#222"/><rect x="841" y="972" width="2" height="6" fill="#222"/><rect x="852" y="972" width="2" height="6" fill="#222"/><rect x="862" y="967" width="2" height="11" fill="#222"/><rect x="872" y="972" width="2" height="6" fill="#222"/><rect x="882" y="972" width="2" height="6" fill="#222"/><rect x="893" y="972" width="2" height="6" fill="#222"/><rect x="903" y="972" width="2" height="6" fill="#222"/><rect x="913" y="964" width="2" height="14" fill="#222"/><rect x="924" y="972" width="2" height="6" fill="#222"/><rect x="934" y="972" width="2" height="6" fill="#222"/><rect x="944" y="972" width="2" height="6" fill="#222"/><rect x="954" y="972" width="2" height="6" fill="#222"/><rect x="965" y="967" width="2" height="11" fill="#222"/><rect x="975" y="972" width="2" height="6" fill="#222"/><rect x="985" y="972" width="2" height="6" fill="#222"/><rect x="996" y="972" width="2" height="6" fill="#222"/><rect x="1006" y="972" width="2" height="6" fill="#222"/><rect x="1016" y="964" width="2" height="14" fill="#222"/><rect x="1026" y="972" width="2" height="6" fill="#222"/><rect x="1037" y="972" width="2" height="6" fill="#222"/><rect x="1047" y="972" width="2" height="6" fill="#222"/><rect x="1057" y="972" width="2" height="6" fill="#222"/><rect x="1068" y="967" width="2" height="11" fill="#222"/><rect x="1078" y="972" width="2" height="6" fill="#222"/><rect x="1088" y="972" width="2" height="6" fill="#222"/><rect x="1098" y="972" width="2" height="6" fill="#222"/><rect x="1109" y="972" width="2" height="6" fill="#222"/><rect x="92" y="960" width="2" height="18" fill="#f0dc28"/></svg><svg class="abs" style="left:10px;top:960px" width="6" height="18" viewBox="0 0 6 18"><circle cx="3" cy="3.500" r="1.600" fill="#3a3a3a"/><circle cx="3" cy="9" r="1.600" fill="#3a3a3a"/><circle cx="3" cy="14.500" r="1.600" fill="#3a3a3a"/></svg><div class="f" style="left:19px;top:960px;width:33px;height:17px;line-height:18px;padding-left:2.500px"><span class="s" style="transform:scaleX(1.02)">1</span></div><div class="f" style="left:56px;top:960px;width:33px;height:17px;line-height:18px;padding-left:2.500px"><span class="s" style="transform:scaleX(1.02)">1</span></div><div class="r" style="left:98px;top:962px;color:#f0dc28">1</div><svg class="abs" style="left:1112px;top:961px" width="38" height="16" viewBox="1112 961 38 16"><g fill="#aaaaaa"><rect x="1113.700" y="962" width="2" height="13"/><path d="M1120.500 963.500v10l-5-5z"/><path d="M1125 962.500l9.500 6-9.500 6 2.500-6z"/><rect x="1145.300" y="962" width="2" height="13"/><path d="M1140.500 963.500v10l5-5z"/></g></svg><div class="f" style="left:1152px;top:960px;width:42px;height:17px;line-height:18px;padding-left:2.500px"><span class="s" style="transform:scaleX(1.02)">1</span></div><div class="f" style="left:1198px;top:960px;width:33px;height:17px;line-height:18px;padding-left:2.500px"><span class="s" style="transform:scaleX(1.02)">100</span></div><div class="f" style="left:1235px;top:960px;width:33px;height:17px;line-height:18px;padding-left:2.500px"><span class="s" style="transform:scaleX(1.02)">100</span></div>
</div>
</body>
</html>
